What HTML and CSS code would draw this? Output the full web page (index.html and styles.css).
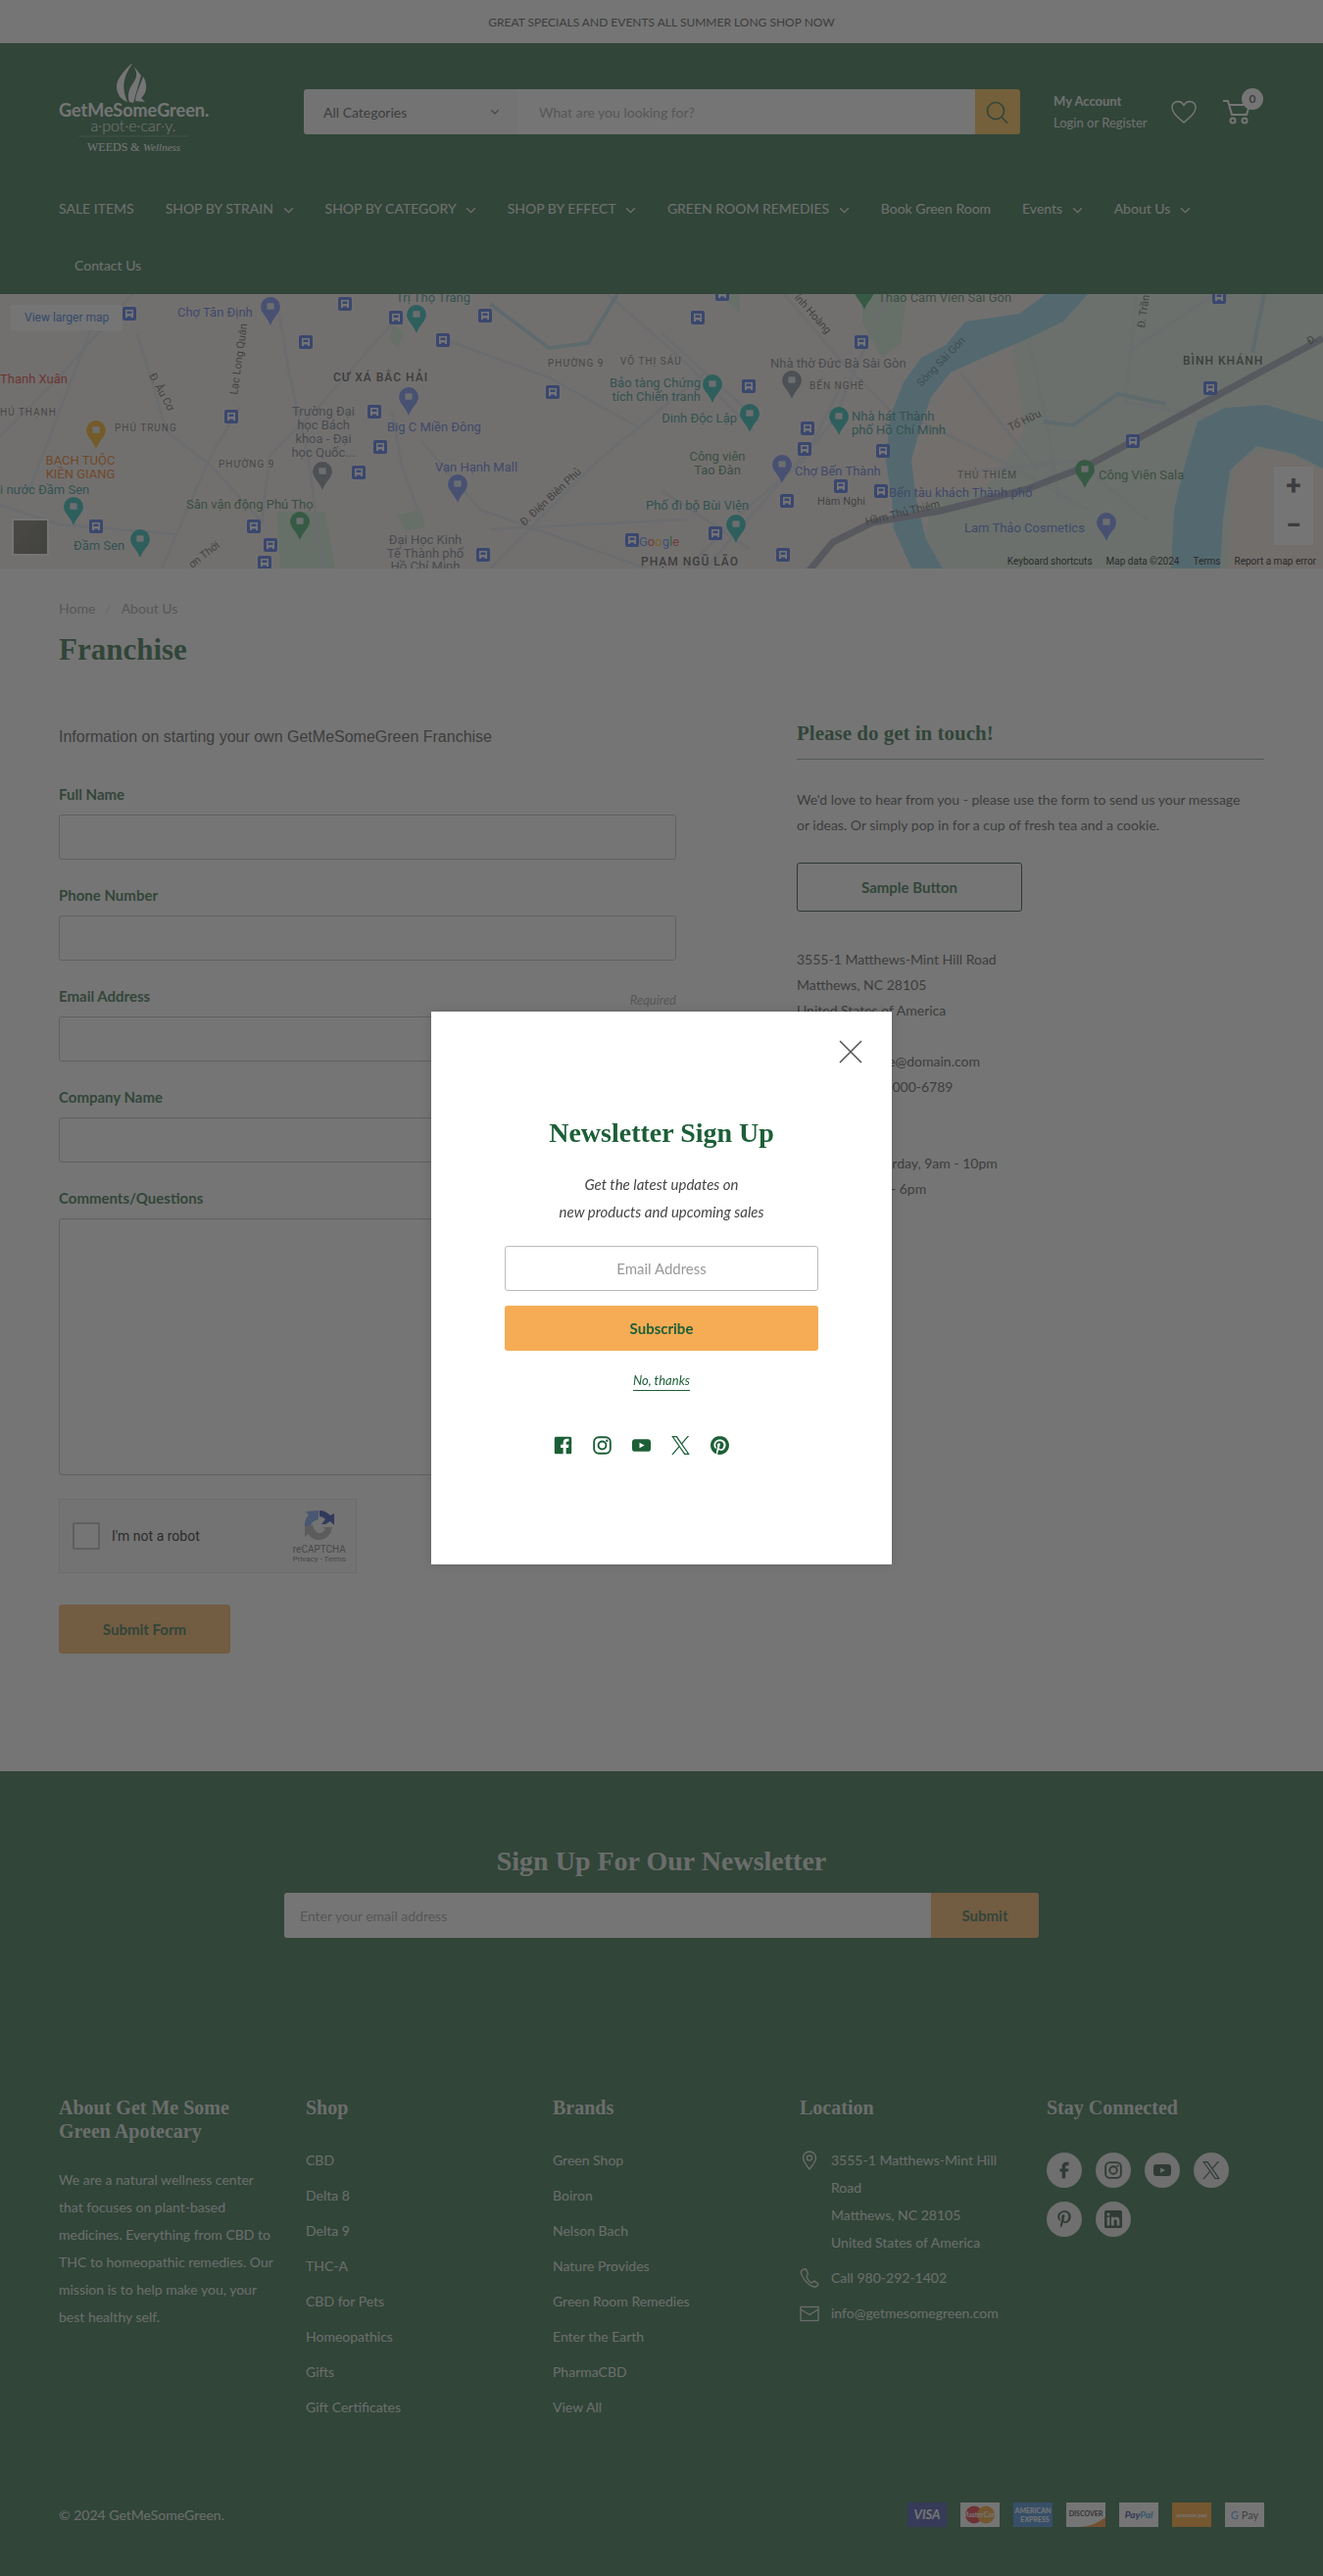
FILE: index.html
```html
<!DOCTYPE html>
<html lang="en">
<head>
<meta charset="UTF-8">
<meta name="viewport" content="width=device-width, initial-scale=1.0">
<title>Franchise - GetMeSomeGreen</title>
<link rel="stylesheet" href="styles.css">
</head>
<body>

<!-- shared icons -->
<svg class="sprite" aria-hidden="true">
  <symbol id="i-chevron" viewBox="0 0 12 8"><path d="M1 1.5l5 5 5-5" fill="none" stroke="currentColor" stroke-width="1.5"/></symbol>
  <symbol id="i-instagram" viewBox="0 0 24 24"><rect x="1.5" y="1.5" width="21" height="21" rx="6" fill="none" stroke="currentColor" stroke-width="2.4"/><circle cx="12" cy="12" r="5" fill="none" stroke="currentColor" stroke-width="2.4"/><circle cx="18" cy="6" r="1.5" fill="currentColor"/></symbol>
  <symbol id="i-youtube" viewBox="0 0 24 24"><path fill="currentColor" fill-rule="evenodd" d="M4 4h16a4 4 0 0 1 4 4v8a4 4 0 0 1-4 4H4a4 4 0 0 1-4-4V8a4 4 0 0 1 4-4zm5.500 4.500v7l6.500-3.500z"/></symbol>
  <symbol id="i-x" viewBox="0 0 24 24"><path fill="currentColor" d="M14.234 10.162 22.977 0h-2.072l-7.591 8.824L7.251 0H.258l9.168 13.343L.258 24H2.33l8.016-9.318L16.749 24h6.993zm-2.837 3.299-.929-1.329L3.076 1.56h3.182l5.965 8.532.929 1.329 7.754 11.09h-3.182z"/></symbol>
  <symbol id="i-facebook" viewBox="0 0 24 24"><path fill="currentColor" d="M18 1h-3.500a5.500 5.500 0 0 0-5.500 5.500V10H6v4h3v9h4.500v-9H17l1-4h-4.500V7A1.500 1.500 0 0 1 15 5.500h3z"/></symbol>
  <symbol id="i-facebook-square" viewBox="0 0 24 24"><path fill="currentColor" d="M3 1h18a2 2 0 0 1 2 2v18a2 2 0 0 1-2 2h-5v-8h3l.5-4H16V9c0-1 .5-2 2-2h1.500V3.600H17c-3 0-4.800 1.900-4.800 5V11H9v4h3.200v8H3a2 2 0 0 1-2-2V3a2 2 0 0 1 2-2z"/></symbol>
  <symbol id="i-pinterest" viewBox="0 0 24 24"><path fill="currentColor" d="M12.017 0C5.396 0 .029 5.367.029 11.987c0 5.079 3.158 9.417 7.618 11.162-.105-.949-.199-2.403.041-3.439.219-.937 1.406-5.957 1.406-5.957s-.359-.72-.359-1.781c0-1.663.967-2.911 2.168-2.911 1.024 0 1.518.769 1.518 1.688 0 1.029-.653 2.567-.992 3.992-.285 1.193.6 2.165 1.775 2.165 2.128 0 3.768-2.245 3.768-5.487 0-2.861-2.063-4.869-5.008-4.869-3.41 0-5.409 2.562-5.409 5.199 0 1.033.394 2.143.889 2.741.099.12.112.225.085.345-.09.375-.293 1.199-.334 1.363-.053.225-.172.271-.401.165-1.495-.69-2.433-2.878-2.433-4.646 0-3.776 2.748-7.252 7.92-7.252 4.158 0 7.392 2.967 7.392 6.923 0 4.135-2.607 7.462-6.233 7.462-1.214 0-2.354-.629-2.758-1.379l-.749 2.848c-.269 1.045-1.004 2.352-1.498 3.146 1.123.345 2.306.535 3.55.535 6.607 0 11.985-5.365 11.985-11.987C23.97 5.39 18.592.026 11.985.026z"/></symbol>
  <symbol id="i-pinterest-p" viewBox="0 0 384 512"><path fill="currentColor" d="M204 6.500C101.400 6.500 0 74.900 0 185.600 0 256 39.600 296 63.600 296c9.900 0 15.600-27.600 15.600-35.400 0-9.300-23.700-29.100-23.700-67.800 0-80.400 61.200-137.400 140.400-137.400 68.100 0 118.500 38.700 118.500 109.800 0 53.100-21.300 152.700-90.300 152.700-24.900 0-46.200-18-46.200-43.800 0-37.800 26.400-74.400 26.400-113.400 0-66.200-93.900-54.200-93.900 25.800 0 16.800 2.100 35.400 9.600 50.700-13.800 59.400-42 147.900-42 209.100 0 18.900 2.700 37.500 4.500 56.400 3.400 3.800 1.700 3.400 6.900 1.500 50.400-69 48.600-82.500 71.400-172.800 12.300 23.400 44.100 36 69.300 36 106.200 0 153.900-103.500 153.900-196.800C384 71.300 298.200 6.500 204 6.500z"/></symbol>
  <symbol id="i-linkedin" viewBox="0 0 24 24"><path fill="currentColor" fill-rule="evenodd" d="M2 0h20a2 2 0 0 1 2 2v20a2 2 0 0 1-2 2H2a2 2 0 0 1-2-2V2a2 2 0 0 1 2-2zm1.500 9v11.500h3.600V9zM5.300 3.300a2 2 0 1 0 0 4.100 2 2 0 0 0 0-4.100zM9.300 9v11.500h3.600v-5.700c0-3.200 4-3.400 4 0v5.700h3.600v-7c0-5.500-5.600-5.600-7.600-2.900V9z"/></symbol>
  <symbol id="m-pin" viewBox="0 0 22 32"><path fill="currentColor" d="M11 0a11 11 0 0 1 11 11c0 7-8 12-11 21C8 23 0 18 0 11A11 11 0 0 1 11 0z"/><rect x="7" y="7" width="8" height="7" rx="1" fill="#dfe6ee"/></symbol>
  <symbol id="m-bus" viewBox="0 0 14 14"><rect width="14" height="14" rx="2" fill="#3b66e8"/><path d="M3 3h8v8H9V9.500H5V11H3zm1.500 1.500v2.500h5V4.500z" fill="#fff" fill-rule="evenodd"/></symbol>
</svg>

<div class="banner">GREAT SPECIALS AND EVENTS ALL SUMMER LONG SHOP NOW</div>

<header class="header">
  <div class="header-main">
    <a class="logo" href="#">
      <svg viewBox="0 0 155 92" width="155" height="92" role="img" aria-label="Get Me Some Green apotecary">
        <path fill="#fff" d="M74 0c-9 9-16 17-15 25 1 7 5 12 11 14-5-13-6-23 5-39zM76 2c4 6 5 11-1 19-4 6-5 12-3 18l4 1 8-28zM86 13c5 8 4 17-2 22l4 4-10-1c1-9 5-15 8-25z"/>
        <text class="logo-name" x="0" y="54" fill="#fff">GetMeSomeGreen.</text>
        <text class="logo-sub" x="76" y="69" text-anchor="middle" fill="#fff">a·pot·e·car·y.</text>
        <path d="M20 74h112" stroke="#5f8a6c" stroke-width="1"/>
        <text class="logo-weeds" x="29" y="89" fill="#fff">WEEDS &amp;</text>
        <text class="logo-well" x="86" y="89" fill="#fff">Wellness</text>
      </svg>
    </a>
    <form class="search">
      <span class="search-cat">
        <select class="search-select" aria-label="Category"><option>All Categories</option></select>
        <svg class="search-arrow" width="10" height="6"><use href="#i-chevron"/></svg>
      </span>
      <input class="search-input" type="text" placeholder="What are you looking for?" aria-label="Search">
      <button class="search-btn" type="button" aria-label="Search">
        <svg width="24" height="24" viewBox="0 0 24 24" fill="none" stroke="#1c5f37" stroke-width="1.6"><circle cx="10" cy="10" r="8.500"/><path d="M16 16.500l6 6"/></svg>
      </button>
    </form>
    <div class="account">
      <strong>My Account</strong>
      <span><a href="#">Login</a> or <a href="#">Register</a></span>
    </div>
    <a class="wish" href="#" aria-label="Wish list">
      <svg width="26" height="24" viewBox="0 0 26 24" fill="none" stroke="#fff" stroke-width="1.500"><path d="M13 23C6 17 1 13 1 7.500 1 1.500 9.500-1 13 5.500 16.500-1 25 1.500 25 7.500 25 13 20 17 13 23z"/></svg>
    </a>
    <a class="cart" href="#" aria-label="Cart">
      <svg width="29" height="26" viewBox="0 0 29 26" fill="none" stroke="#fff" stroke-width="2"><path d="M1 2h5l4 14h15l3-10H7"/><circle cx="11" cy="22" r="2.500"/><circle cx="23" cy="22" r="2.500"/></svg>
      <span class="cart-count">0</span>
    </a>
  </div>
  <nav class="nav">
    <a href="#">SALE ITEMS</a>
    <a href="#">SHOP BY STRAIN <svg width="11" height="7"><use href="#i-chevron"/></svg></a>
    <a href="#">SHOP BY CATEGORY <svg width="11" height="7"><use href="#i-chevron"/></svg></a>
    <a href="#">SHOP BY EFFECT <svg width="11" height="7"><use href="#i-chevron"/></svg></a>
    <a href="#">GREEN ROOM REMEDIES <svg width="11" height="7"><use href="#i-chevron"/></svg></a>
    <a href="#">Book Green Room</a>
    <a href="#">Events <svg width="11" height="7"><use href="#i-chevron"/></svg></a>
    <a href="#">About Us <svg width="11" height="7"><use href="#i-chevron"/></svg></a>
    <a href="#">Contact Us</a>
  </nav>
</header>

<div class="map">
  <svg class="map-canvas" viewBox="0 0 1350 280" preserveAspectRatio="xMidYMid slice">
    <rect width="1350" height="280" fill="#f3efeb"/>
    <!-- land and parks -->
    <path fill="#dcefe0" d="M1110 0h240v280H962l-17-30 10-80 60-40 20-80z"/>
    <path fill="#f3eae2" d="M975 85l60-20 10 75-40 60-65 5-8-40z"/>
    <path fill="#cdeed6" d="M282 222h50l10 58h-56zM880 0h45l-5 50-20 15-20-35zM400 30l12 10-6 15-8-8zM405 225l25-5 4 18-20 4zM735 0h20v20z"/>
    <path fill="#f3e8df" d="M1258 170l40-12 52 22v100h-96z"/>
    <!-- roads -->
    <g fill="none" stroke="#dcdfe8" stroke-width="3">
      <path d="M95 30L30 200M0 145l60-60L135 0M140 40l30 100 45 35 50 55M215 165L165 280M285 20l10 60 20 90 15 110M400 30l-75 85-50 50-8 70M0 215l60 20 120 10M215 165l30-50M400 120l10 55 20 55M500 280l110-110 110-90M430 150l60 70 170 60M620 0l80 70 70 70M700 280l60-60 60-50 40-80M675 40l100 90M800 0l60 70 60 60M450 45l110 40 90 50M720 280l130-150 60-140"/>
      <path d="M980 80l80 100M1050 50l20 90 10 70M1160 0l-12 110M1150 60l90-60M1148 110l110 20M1000 180l100-10 70 60M940 130l90 45 80 45M675 200l90 60M500 240L700 230"/>
    </g>
    <path fill="none" stroke="#b4dbe4" stroke-width="4" d="M500 10l60 45 40-5 30-50M1290 0l-12 60M1065 130l30 4 45-32 50 10"/>
    <!-- rivers -->
    <path fill="#92d6ea" d="M1067 0l-27 20-55 8-20 24-25 13-18 25-14 35-4 45 6 40 2 30 18 40h32l-17-30-10-40-5-40 8-30 12-35 20-25 40-18 40-17 35-17 25-28z"/>
    <path fill="#92d6ea" d="M1195 280l3-60 12-50 12-40 28-14 42-3 58 17v48l-30-15-38-8-27 25-7 50-3 50z"/>
    <path fill="none" stroke="#9aa2b6" stroke-width="7" d="M1350 45l-240 130-62 24-88 22-70 12-40 20-25 30"/>
    <!-- street names -->
    <g class="map-street">
      <text transform="translate(152 83) rotate(62)">Đ. Âu Cơ</text>
      <text transform="translate(242 103) rotate(-82)">Lạc Long Quân</text>
      <text transform="translate(535 237) rotate(-43)">Đ. Điện Biên Phủ</text>
      <text transform="translate(196 280) rotate(-38)">ơn Thới</text>
      <text transform="translate(810 4) rotate(48)">ính Hoàng</text>
      <text transform="translate(1168 35) rotate(-82)">Đ. Trần</text>
      <text transform="translate(884 236) rotate(-14)">Hầm Thủ Thiêm</text>
      <text transform="translate(1031 140) rotate(-26)">Tố Hữu</text>
      <text transform="translate(1336 52) rotate(-28)">Đ.</text>
      <text transform="translate(940 95) rotate(-46)" fill="#3d7d96">Sông Sài Gòn</text>
      <text x="834" y="215">Hàm Nghi</text>
    </g>
    <g class="map-area">
      <text x="0" y="124">HÚ THẠNH</text><text x="117" y="140">PHÚ TRUNG</text>
      <text x="223" y="177">PHƯỜNG 9</text><text x="559" y="74">PHƯỜNG 9</text>
      <text x="633" y="72">VÕ THỊ SÁU</text><text x="826" y="97">BẾN NGHÉ</text>
      <text x="977" y="188">THỦ THIÊM</text>
      <text class="map-area-big" x="340" y="89">CƯ XÁ BẮC HẢI</text>
      <text class="map-area-big" x="1207" y="72">BÌNH KHÁNH</text>
      <text class="map-area-big" x="654" y="277">PHẠM NGŨ LÃO</text>
    </g>
    <g class="map-poi" fill="#4d6dd8">
      <text x="181" y="23">Chợ Tân Định</text><text x="395" y="140">Big C Miền Đông</text>
      <text x="444" y="181">Vạn Hạnh Mall</text><text x="811" y="185">Chợ Bến Thành</text>
      <text x="907" y="207">Bến tàu khách Thành phố</text><text x="984" y="243">Lam Thảo Cosmetics</text>
    </g>
    <g class="map-poi" fill="#1b8a86">
      <text x="404" y="8">Trị Thọ Trang</text><text x="0" y="204">i nước Đầm Sen</text><text x="75" y="261">Đầm Sen</text>
      <text x="715" y="95" text-anchor="end">Bảo tàng Chứng</text><text x="715" y="109" text-anchor="end">tích Chiến tranh</text>
      <text x="752" y="131" text-anchor="end">Dinh Độc Lập</text><text x="869" y="129">Nhà hát Thành</text>
      <text x="869" y="143">phố Hồ Chí Minh</text><text x="659" y="220">Phố đi bộ Bùi Viện</text>
    </g>
    <g class="map-poi" fill="#3c7d55">
      <text x="190" y="219">Sân vận động Phú Thọ</text><text x="896" y="8">Thảo Cầm Viên Sài Gòn</text>
      <text x="732" y="170" text-anchor="middle">Công viên</text><text x="732" y="184" text-anchor="middle">Tao Đàn</text>
      <text x="1121" y="189">Công Viên Sala</text>
    </g>
    <g class="map-poi" fill="#6a7280">
      <text x="786" y="75">Nhà thờ Đức Bà Sài Gòn</text>
      <text x="330" y="124" text-anchor="middle">Trường Đại</text><text x="330" y="138" text-anchor="middle">học Bách</text>
      <text x="330" y="152" text-anchor="middle">khoa - Đại</text><text x="330" y="166" text-anchor="middle">học Quốc...</text>
      <text x="434" y="255" text-anchor="middle">Đại Học Kinh</text><text x="434" y="269" text-anchor="middle">Tế Thành phố</text>
      <text x="434" y="282" text-anchor="middle">Hồ Chí Minh</text>
    </g>
    <g class="map-poi">
      <text x="0" y="91" fill="#e0281c">Thanh Xuân</text>
      <text x="82" y="174" text-anchor="middle" fill="#ee6a00">BẠCH TUỘC</text>
      <text x="82" y="188" text-anchor="middle" fill="#ee6a00">KIÊN GIANG</text>
      <text x="652" y="257"><tspan fill="#4285f4">G</tspan><tspan fill="#ea4335">o</tspan><tspan fill="#fbbc05">o</tspan><tspan fill="#4285f4">g</tspan><tspan fill="#34a853">l</tspan><tspan fill="#ea4335">e</tspan></text>
    </g>
    <!-- markers -->
    <g color="#6a87f5">
      <use href="#m-pin" x="266" y="3" width="20" height="29"/><use href="#m-pin" x="407" y="95" width="20" height="29"/>
      <use href="#m-pin" x="457" y="184" width="20" height="29"/><use href="#m-pin" x="788" y="164" width="20" height="29"/>
      <use href="#m-pin" x="1119" y="223" width="20" height="29"/>
    </g>
    <g color="#12b5b0">
      <use href="#m-pin" x="415" y="11" width="20" height="29"/><use href="#m-pin" x="717" y="82" width="20" height="29"/>
      <use href="#m-pin" x="755" y="112" width="20" height="29"/><use href="#m-pin" x="846" y="115" width="20" height="29"/>
      <use href="#m-pin" x="65" y="207" width="20" height="29"/><use href="#m-pin" x="133" y="240" width="20" height="29"/>
      <use href="#m-pin" x="741" y="225" width="20" height="29"/>
    </g>
    <g color="#2fa35a">
      <use href="#m-pin" x="296" y="222" width="20" height="29"/><use href="#m-pin" x="1097" y="169" width="20" height="29"/>
      <use href="#m-pin" x="872" y="-13" width="20" height="29"/>
    </g>
    <g color="#78848f"><use href="#m-pin" x="319" y="171" width="20" height="29"/><use href="#m-pin" x="798" y="78" width="20" height="29"/></g>
    <g color="#ffa800"><use href="#m-pin" x="88" y="129" width="20" height="29"/></g>
    <g id="stops"></g>
  </svg>
  <a class="map-larger" href="#">View larger map</a>
  <div class="map-sat"></div>
  <div class="map-zoom"><button type="button" aria-label="Zoom in">+</button><button type="button" aria-label="Zoom out">−</button></div>
  <div class="map-legal"><a href="#">Keyboard shortcuts</a><span>Map data ©2024</span><a href="#">Terms</a><a href="#">Report a map error</a></div>
</div>

<main class="page">
  <div class="crumbs"><a href="#">Home</a><span>/</span><a href="#">About Us</a></div>
  <h1 class="page-title">Franchise</h1>
  <div class="columns">
    <form class="contact">
      <p class="intro">Information on starting your own GetMeSomeGreen Franchise</p>
      <div class="field"><div class="field-top"><label for="name">Full Name</label></div><input id="name" type="text"></div>
      <div class="field"><div class="field-top"><label for="phone">Phone Number</label></div><input id="phone" type="text"></div>
      <div class="field"><div class="field-top"><label for="email">Email Address</label><small>Required</small></div><input id="email" type="email"></div>
      <div class="field"><div class="field-top"><label for="company">Company Name</label></div><input id="company" type="text"></div>
      <div class="field"><div class="field-top"><label for="comments">Comments/Questions</label></div><textarea id="comments"></textarea></div>
      <div class="captcha">
        <input id="robot" type="checkbox"><label for="robot">I'm not a robot</label>
        <div class="captcha-brand">
          <svg width="32" height="32" viewBox="0 0 32 32"><path fill="#1c3aa9" d="M31 4v12L27 12l-5 3H18l4-5c-2-2-4-3-6-3V1c5 0 8 2 11 5z"/><path fill="#6d9bf5" d="M15 1v9l-5 2c-2 2-3 3-3 5H1C1 12 2 8 5 6L2 2z"/><path fill="#ababab" d="M1 17l8-1 2 5c4 5 9 3 11-1l-3-2h10c-1 8-7 13-13 13-5 0-9-2-11-6l-4 3z"/></svg>
          <b>reCAPTCHA</b>
          <span>Privacy - Terms</span>
        </div>
      </div>
      <button class="btn btn-submit" type="button">Submit Form</button>
    </form>
    <aside class="touch">
      <h2>Please do get in touch!</h2>
      <p>We'd love to hear from you - please use the form to send us your message or ideas. Or simply pop in for a cup of fresh tea and a cookie.</p>
      <button class="btn btn-outline" type="button">Sample Button</button>
      <address>3555-1 Matthews-Mint Hill Road<br>Matthews, NC 28105<br>United States of America<br><br>customerservice@domain.com<br>Phone: +1-000-000-6789<br><br><br>Monday to Saturday, 9am - 10pm<br>Sundays, 10am - 6pm</address>
    </aside>
  </div>
</main>

<footer class="footer">
  <h2 class="news-title">Sign Up For Our Newsletter</h2>
  <form class="news-form">
    <input type="email" placeholder="Enter your email address" aria-label="Email address">
    <button type="button">Submit</button>
  </form>
  <div class="footer-cols">
    <section>
      <h3>About Get Me Some Green Apotecary</h3>
      <p>We are a natural wellness center that focuses on plant-based medicines. Everything from CBD to THC to homeopathic remedies. Our mission is to help make you, your best healthy self.</p>
    </section>
    <section>
      <h3>Shop</h3>
      <ul>
        <li><a href="#">CBD</a></li>
        <li><a href="#">Delta 8</a></li>
        <li><a href="#">Delta 9</a></li>
        <li><a href="#">THC-A</a></li>
        <li><a href="#">CBD for Pets</a></li>
        <li><a href="#">Homeopathics</a></li>
        <li><a href="#">Gifts</a></li>
        <li><a href="#">Gift Certificates</a></li>
      </ul>
    </section>
    <section>
      <h3>Brands</h3>
      <ul>
        <li><a href="#">Green Shop</a></li>
        <li><a href="#">Boiron</a></li>
        <li><a href="#">Nelson Bach</a></li>
        <li><a href="#">Nature Provides</a></li>
        <li><a href="#">Green Room Remedies</a></li>
        <li><a href="#">Enter the Earth</a></li>
        <li><a href="#">PharmaCBD</a></li>
        <li><a href="#">View All</a></li>
      </ul>
    </section>
    <section>
      <h3>Location</h3>
      <ul class="location">
        <li><svg width="20" height="20" viewBox="0 0 20 20" fill="none" stroke="currentColor" stroke-width="1.300"><path d="M10 19C6 14 3.500 11 3.500 7.500a6.500 6.500 0 0 1 13 0C16.500 11 14 14 10 19z"/><circle cx="10" cy="7.500" r="2.600"/></svg><span>3555-1 Matthews-Mint Hill Road<br>Matthews, NC 28105<br>United States of America</span></li>
        <li><svg width="20" height="20" viewBox="0 0 20 20" fill="none" stroke="currentColor" stroke-width="1.300"><path d="M4 1L1.500 3c-1 5 8 16 14 16 1.500 0 3-1.500 3.500-3l-4-3-3 2c-2-1-4-4-5-6.500L8.500 6 6.500 1z"/></svg><a href="#">Call 980-292-1402</a></li>
        <li><svg width="20" height="20" viewBox="0 0 20 20" fill="none" stroke="currentColor" stroke-width="1.300"><rect x="1" y="3.500" width="18" height="14"/><path d="M1 6l9 5.500L19 6"/></svg><a href="#">info@getmesomegreen.com</a></li>
      </ul>
    </section>
    <section>
      <h3>Stay Connected</h3>
      <div class="social">
        <a href="#" aria-label="Facebook"><svg width="18" height="18"><use href="#i-facebook"/></svg></a>
        <a href="#" aria-label="Instagram"><svg width="18" height="18"><use href="#i-instagram"/></svg></a>
        <a href="#" aria-label="YouTube"><svg width="18" height="18"><use href="#i-youtube"/></svg></a>
        <a href="#" aria-label="X"><svg width="18" height="18"><use href="#i-x"/></svg></a>
        <a href="#" aria-label="Pinterest"><svg width="18" height="18"><use href="#i-pinterest-p"/></svg></a>
        <a href="#" aria-label="LinkedIn"><svg width="18" height="18"><use href="#i-linkedin"/></svg></a>
      </div>
    </section>
  </div>
  <div class="footer-bottom">
    <span>© 2024 GetMeSomeGreen.</span>
    <div class="cards">
      <svg viewBox="0 0 40 25"><rect width="40" height="25" fill="#2a3f9d"/><text x="20" y="17" class="card-text" font-size="13" font-style="italic" fill="#fff">VISA</text></svg>
      <svg viewBox="0 0 40 25"><rect width="40" height="25" fill="#fff"/><circle cx="14" cy="12.500" r="9" fill="#e8202a"/><circle cx="26" cy="12.500" r="9" fill="#f49a1c"/><text x="20" y="15" class="card-text" font-size="7" fill="#fff">MasterCard</text></svg>
      <svg viewBox="0 0 40 25"><rect width="40" height="25" fill="#2f80d2"/><text x="20" y="11" class="card-text" font-size="7" fill="#fff">AMERICAN</text><text x="22" y="20" class="card-text" font-size="7" fill="#fff">EXPRESS</text></svg>
      <svg viewBox="0 0 40 25"><rect width="40" height="25" fill="#fff"/><path d="M40 15v10H14c12-1 20-5 26-10z" fill="#f58220"/><text x="20" y="14" class="card-text" font-size="7" fill="#222">DISCOVER</text></svg>
      <svg viewBox="0 0 40 25"><rect width="40" height="25" fill="#fff"/><text x="20" y="16" class="card-text" font-size="10" font-style="italic" fill="#1d3690">Pay<tspan fill="#2f9be0">Pal</tspan></text></svg>
      <svg viewBox="0 0 40 25"><rect width="40" height="25" fill="#ff9a1a"/><text x="20" y="15" class="card-text" font-size="6" fill="#fff">amazon pay</text></svg>
      <svg viewBox="0 0 40 25"><rect width="40" height="25" fill="#fff"/><text x="20" y="17" class="card-text card-light" font-size="11" fill="#555"><tspan fill="#4285f4">G</tspan> Pay</text></svg>
    </div>
  </div>
</footer>

<div class="overlay"></div>
<div class="modal" role="dialog" aria-labelledby="modalTitle">
  <button class="modal-close" type="button" aria-label="Close"><svg width="24" height="24" viewBox="0 0 24 24" stroke="#555" stroke-width="1.600"><path d="M1 1l22 22M23 1L1 23"/></svg></button>
  <h2 id="modalTitle">Newsletter Sign Up</h2>
  <p>Get the latest updates on<br>new products and upcoming sales</p>
  <input type="email" placeholder="Email Address" aria-label="Email Address">
  <button class="modal-subscribe" type="button">Subscribe</button>
  <a class="modal-no" href="#">No, thanks</a>
  <div class="modal-social">
    <a href="#" aria-label="Facebook"><svg width="19" height="19"><use href="#i-facebook-square"/></svg></a>
    <a href="#" aria-label="Instagram"><svg width="19" height="19"><use href="#i-instagram"/></svg></a>
    <a href="#" aria-label="YouTube"><svg width="19" height="19"><use href="#i-youtube"/></svg></a>
    <a href="#" aria-label="X"><svg width="19" height="19"><use href="#i-x"/></svg></a>
    <a href="#" aria-label="Pinterest"><svg width="19" height="19"><use href="#i-pinterest"/></svg></a>
  </div>
</div>

<script>
// transit stops on the map
var stops = [[352,10],[404,24],[495,22],[452,47],[312,49],[132,20],[564,100],[236,125],[382,120],[388,156],[366,182],[98,237],[259,237],[276,256],[270,274],[493,266],[645,251],[712,24],[737,0],[879,49],[1244,3],[764,94],[1235,96],[824,137],[821,158],[901,160],[1156,150],[858,196],[899,201],[803,211],[730,244],[799,266]];
document.getElementById("stops").innerHTML = stops.map(function (s) {
  return '<use href="#m-bus" x="' + (s[0] - 7) + '" y="' + (s[1] - 7) + '" width="14" height="14"/>';
}).join("");
</script>
</body>
</html>
```

FILE: styles.css
```css
* {
  box-sizing: border-box;
}

body {
  margin: 0;
  font-family: Lato, "Liberation Sans", sans-serif;
  font-size: 14px;
  color: #444;
  background: #fff;
}

a {
  color: inherit;
  text-decoration: none;
}

h1, h2, h3 {
  margin: 0;
  font-family: "Liberation Serif", serif;
  font-weight: bold;
  color: #1c5f37;
}

p, ul {
  margin: 0;
  padding: 0;
}

ul {
  list-style: none;
}

input, select, textarea, button {
  font-family: inherit;
  font-size: 14px;
  color: #444;
}

button {
  cursor: pointer;
}

::placeholder {
  color: #999;
  opacity: 1;
}

.sprite {
  position: absolute;
  width: 0;
  height: 0;
}

/* header */
.banner {
  height: 44px;
  line-height: 46px;
  text-align: center;
  font-size: 12px;
}

.header {
  background: #1c5f37;
  color: #e8eee9;
  padding: 0 60px;
}

.header-main {
  display: flex;
  align-items: center;
  height: 140px;
}

.logo {
  width: 250px;
  flex: none;
}

.logo svg {
  display: block;
  margin-top: -6px;
}

.logo-name {
  font-size: 18px;
  font-weight: bold;
}

.logo-sub {
  font-size: 16px;
  font-weight: 300;
}

.logo-weeds {
  font-family: "Liberation Serif", serif;
  font-size: 12px;
}

.logo-well {
  font-family: "Liberation Serif", serif;
  font-size: 11px;
  font-style: italic;
}

.search {
  display: flex;
  flex: 1;
  height: 46px;
  border-radius: 3px;
  overflow: hidden;
}

.search-cat {
  position: relative;
  width: 218px;
}

.search-select {
  width: 100%;
  height: 100%;
  padding: 0 20px;
  border: 0;
  background: #f9f9f9;
  appearance: none;
}

.search-arrow {
  position: absolute;
  right: 18px;
  top: 20px;
  color: #555;
}

.search-input {
  flex: 1;
  min-width: 0;
  border: 0;
  padding: 0 22px;
}

.search-btn {
  width: 46px;
  padding: 5px 0 0;
  border: 0;
  background: #fbb83c;
}

.account {
  display: flex;
  flex-direction: column;
  width: 120px;
  margin-left: 34px;
  line-height: 22px;
  font-size: 13px;
}

.wish {
  margin-right: 26px;
  line-height: 0;
}

.cart {
  position: relative;
  width: 43px;
  line-height: 0;
}

.cart-count {
  position: absolute;
  left: 20px;
  top: -11px;
  width: 22px;
  height: 22px;
  border-radius: 50%;
  background: #fff;
  color: #444;
  line-height: 22px;
  text-align: center;
  font-size: 12px;
  font-weight: bold;
}

.nav {
  display: flex;
  flex-wrap: wrap;
  margin-left: -16px;
}

.nav a {
  padding: 0 16px;
  line-height: 58px;
}

.nav a:last-child {
  margin-left: 16px;
}

.nav svg {
  margin-left: 6px;
}

/* map */
.map {
  position: relative;
  height: 280px;
  font-family: Roboto, sans-serif;
}

.map-canvas {
  display: block;
  width: 100%;
  height: 280px;
}

.map-poi {
  font-size: 13px;
}

.map-street {
  font-size: 11px;
  fill: #555;
}

.map-area {
  font-size: 10px;
  letter-spacing: 1px;
  fill: #666;
}

.map-area-big {
  font-size: 12px;
  font-weight: 500;
  fill: #444;
}

.map-larger {
  position: absolute;
  left: 11px;
  top: 11px;
  padding: 0 14px;
  line-height: 26px;
  font-size: 12px;
  color: #2a6fe0;
  background: #fff;
}

.map-sat {
  position: absolute;
  left: 12px;
  bottom: 13px;
  width: 38px;
  height: 38px;
  border: 2px solid #fff;
  background: linear-gradient(120deg, #6d6a60, #55554a);
}

.map-zoom {
  position: absolute;
  right: 10px;
  bottom: 24px;
  display: flex;
  flex-direction: column;
  background: #fff;
}

.map-zoom button {
  width: 40px;
  height: 40px;
  padding: 0;
  border: 0;
  background: none;
  font-size: 28px;
  font-weight: bold;
  line-height: 40px;
}

.map-legal {
  position: absolute;
  right: 0;
  bottom: 0;
  display: flex;
  gap: 14px;
  padding: 0 7px;
  line-height: 15px;
  font-size: 10px;
  color: #000;
}

/* page */
.page {
  padding: 29px 60px 120px;
}

.crumbs {
  display: flex;
  gap: 10px;
  line-height: 24px;
  font-size: 14px;
  color: #999;
}

.crumbs span {
  color: #ddd;
}

.page-title {
  margin: 12px 0 55px;
  font-size: 31px;
  line-height: 36px;
}

.columns {
  display: grid;
  grid-template-columns: minmax(0, 630px) minmax(0, 477px);
  justify-content: space-between;
}

.intro {
  margin-bottom: 32px;
  font-family: "Liberation Sans", Arial, sans-serif;
  font-size: 16px;
  line-height: 32px;
}

.field {
  margin-bottom: 26px;
}

.field-top {
  display: flex;
  justify-content: space-between;
  margin-bottom: 11px;
  line-height: 20px;
}

.field-top label {
  font-size: 15px;
  font-weight: bold;
  color: #1c5f37;
}

.field-top small {
  font-size: 13px;
  line-height: 28px;
  height: 20px;
  font-style: italic;
  color: #999;
}

.field input,
.field textarea {
  display: block;
  width: 100%;
  height: 46px;
  padding: 0 14px;
  border: 1px solid #b9b9b9;
  border-radius: 3px;
  background: #fff;
}

.field textarea {
  height: 262px;
  padding: 12px 14px;
  resize: none;
}

.captcha {
  display: flex;
  align-items: center;
  width: 304px;
  height: 76px;
  margin-top: -2px;
  padding: 0 10px 0 13px;
  border: 1px solid #e4e4e4;
  background: #f9f9f9;
  font-family: Roboto, sans-serif;
}

.captcha input {
  width: 28px;
  height: 28px;
  margin: 0 12px 0 0;
  border: 2px solid #b5b5b5;
  border-radius: 2px;
  background: #fff;
  appearance: none;
}

.captcha label {
  flex: 1;
  color: #000;
}

.captcha-brand {
  display: flex;
  flex-direction: column;
  align-items: center;
  font-size: 8px;
  color: #666;
}

.captcha-brand b {
  margin-top: 3px;
  font-size: 10px;
  font-weight: normal;
}

.btn {
  display: block;
  height: 50px;
  border: 1px solid #f5ac55;
  border-radius: 3px;
  background: #f5ac55;
  color: #1c5f37;
  font-size: 15px;
  font-weight: bold;
}

.btn-submit {
  width: 175px;
  margin-top: 32px;
}

.btn-outline {
  width: 230px;
  border-color: #1a3524;
  background: none;
}

.touch h2 {
  margin-bottom: 28px;
  padding-bottom: 14px;
  border-bottom: 1px solid #8f9f96;
  font-size: 21px;
  line-height: 24px;
}

.touch p {
  margin-bottom: 25px;
  padding-right: 16px;
  line-height: 26px;
}

.touch address {
  margin-top: 36px;
  font-style: normal;
  line-height: 26px;
}

/* footer */
.footer {
  padding: 74px 60px 50px;
  background: #1c5f37;
  color: #dde5df;
}

.footer h2,
.footer h3 {
  color: #dde5df;
}

.news-title {
  font-size: 28px;
  line-height: 36px;
  text-align: center;
}

.news-form {
  display: flex;
  max-width: 770px;
  height: 46px;
  margin: 14px auto 161px;
  border-radius: 3px;
  overflow: hidden;
}

.news-form input {
  flex: 1;
  padding: 0 16px;
  border: 0;
  background: #fff;
}

.news-form button {
  width: 110px;
  border: 0;
  background: #f5ac55;
  color: #1c5f37;
  font-size: 15px;
  font-weight: bold;
}

.footer-cols {
  display: grid;
  grid-template-columns: repeat(5, minmax(0, 1fr));
  gap: 30px;
  line-height: 28px;
}

.footer-cols h3 {
  margin-bottom: 24px;
  font-size: 20px;
  line-height: 24px;
}

.footer-cols li {
  padding: 4px 0;
}

.location li {
  display: flex;
  gap: 12px;
}

.location svg {
  flex: none;
  margin-top: 4px;
}

.social {
  display: flex;
  flex-wrap: wrap;
  gap: 14px;
  padding-top: 10px;
}

.social a {
  display: flex;
  align-items: center;
  justify-content: center;
  width: 36px;
  height: 36px;
  border-radius: 50%;
  background: #e6e9e7;
  color: #1c3f2a;
}

.footer-bottom {
  display: flex;
  justify-content: space-between;
  align-items: center;
  margin-top: 79px;
}

.cards {
  display: flex;
  gap: 14px;
}

.cards svg {
  width: 40px;
  height: 25px;
}

.card-text {
  text-anchor: middle;
  font-weight: bold;
}

.card-light {
  font-weight: normal;
}

/* newsletter popup */
.overlay {
  position: fixed;
  inset: 0;
  z-index: 10;
  background: rgba(58, 58, 58, 0.7);
}

.modal {
  position: fixed;
  left: 50%;
  top: 50%;
  z-index: 11;
  display: flex;
  flex-direction: column;
  align-items: center;
  width: 470px;
  height: 564px;
  padding: 106px 75px 0;
  background: #fff;
  transform: translate(-50%, -50%);
  box-shadow: 0 0 10px rgba(0, 0, 0, 0.15);
}

.modal-close {
  position: absolute;
  right: 30px;
  top: 29px;
  padding: 0;
  border: 0;
  background: none;
  line-height: 0;
}

.modal h2 {
  margin-bottom: 20px;
  font-size: 28px;
  line-height: 36px;
}

.modal p {
  margin-bottom: 21px;
  text-align: center;
  font-size: 15px;
  font-style: italic;
  line-height: 28px;
}

.modal input {
  width: 100%;
  height: 46px;
  border: 1px solid #bbb;
  border-radius: 3px;
  text-align: center;
  font-size: 15px;
}

.modal-subscribe {
  width: 100%;
  height: 46px;
  margin: 15px 0 20px;
  border: 0;
  border-radius: 3px;
  background: #f5ac55;
  color: #1c5f37;
  font-size: 15px;
  font-weight: bold;
}

.modal-no {
  border-bottom: 1px solid #1c5f37;
  font-size: 13px;
  font-style: italic;
  line-height: 20px;
  color: #1c5f37;
}

.modal-social {
  display: flex;
  gap: 21px;
  align-self: flex-start;
  margin: 46px 0 0 50px;
  line-height: 0;
  color: #1c5f37;
}
```
